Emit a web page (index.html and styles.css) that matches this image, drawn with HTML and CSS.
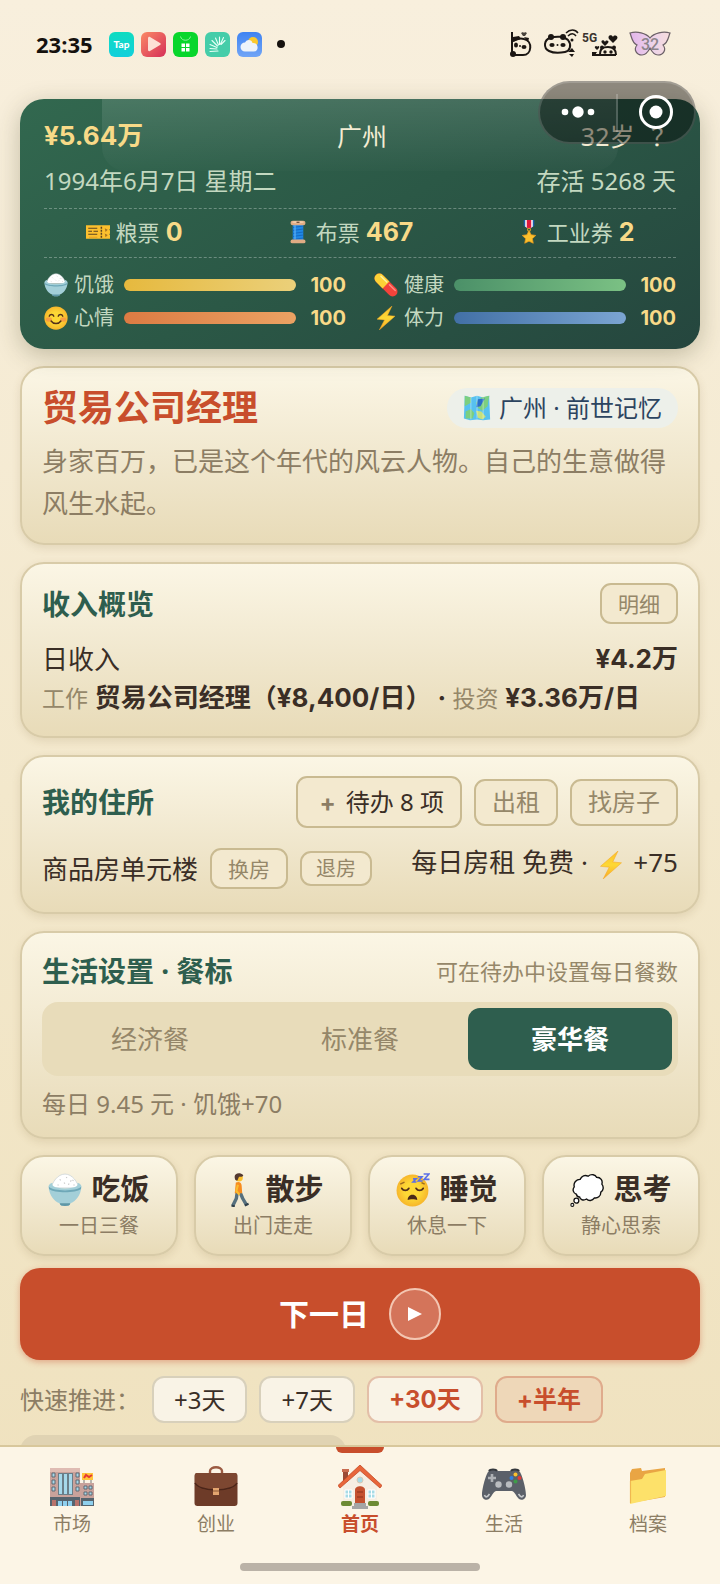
FILE: index.html
```html
<!DOCTYPE html>
<html lang="zh-CN">
<head>
    <meta charset="UTF-8">
    <meta name="viewport" content="width=device-width, initial-scale=1.0">
    <title>首页</title>
    <link rel="stylesheet" href="styles.css">
</head>
<body>

<!-- 图标 -->
<svg class="defs" aria-hidden="true">
    <defs>
        <linearGradient id="g-tap" x1="0" y1="0" x2="0" y2="1"><stop offset="0" stop-color="#0fdcc0"/><stop offset="1" stop-color="#12cfdc"/></linearGradient>
        <linearGradient id="g-play" x1="0" y1="0" x2="1" y2="1"><stop offset="0" stop-color="#fb8a66"/><stop offset="1" stop-color="#d52e58"/></linearGradient>
        <linearGradient id="g-sky" x1="0" y1="0" x2="0" y2="1"><stop offset="0" stop-color="#3f83f2"/><stop offset="1" stop-color="#71a5f6"/></linearGradient>
        <linearGradient id="g-wing" x1="0" y1="0" x2="1" y2="0"><stop offset="0" stop-color="#e3b4ea"/><stop offset=".55" stop-color="#ecd3ea"/><stop offset="1" stop-color="#f7dcdc"/></linearGradient>
        <linearGradient id="g-bolt" x1="0" y1="0" x2="0" y2="1"><stop offset="0" stop-color="#fbc02d"/><stop offset=".5" stop-color="#fdd835"/><stop offset="1" stop-color="#f9a825"/></linearGradient>
        <radialGradient id="g-face"><stop offset=".5" stop-color="#fdd835"/><stop offset="1" stop-color="#f7b62b"/></radialGradient>
    </defs>
    <symbol id="i-rice" viewBox="0 0 32 32">
        <path d="M3 14C4 9 9 1 16 1s12 8 13 13z" fill="#fff" stroke="#c9d3d6" stroke-width=".7"/>
        <path d="M11 6l1 1M17 4l1 .6M21 8l1-1M15 9l1 1M24 11l1 .6M19 11l1-1M9 11l1 .5M23 6.500l1 1" stroke="#c9c9c9" stroke-width="1" fill="none"/>
        <path d="M.5 12.500C1 10.500 3 9 4.500 9.500c-2 2 1 5 11.500 5s13.500-3 11.500-5c1.500-.5 3.500 1 4 3C31 21 26 27 21 28.500c0 2-2 2.500-5 2.500s-5-.5-5-2.500C6 27 1 21 .5 12.500z" fill="#a3cfd8"/>
        <path d="M.8 13C5 17.500 27 17.500 31.200 13L31 15C26 19 6 19 1 15z" fill="#6ea8b8"/>
        <path d="M11 28.500h10c0 2-2 2.500-5 2.500s-5-.5-5-2.500z" fill="#5f97a6"/>
    </symbol>
    <symbol id="i-ticket" viewBox="0 0 32 32">
        <path d="M0 7h32v5l-1 1 1 1v4l-1 1 1 1v5H0z" fill="#fcc02e"/>
        <path d="M3 11h12M3 15h5M10 15h6M3 19h12" stroke="#5b4423" stroke-width="1.600"/>
        <path d="M4 23h11" stroke="#d99822"/>
        <path d="M20.500 9v15" stroke="#5b4423" stroke-width="2" stroke-dasharray="2.500 1.500"/>
        <path d="M25 11l4 2-3 3zM25 18l4 2-3 3z" fill="#a87421"/>
    </symbol>
    <symbol id="i-spool" viewBox="0 0 32 32">
        <path d="M9 5h14v22H9z" fill="#1e88e5"/>
        <path d="M9 10l14-2M9 14l14-2M9 18l14-2M9 22l14-2M9 26l14-2" stroke="#1565c0" stroke-width="1.200"/>
        <path d="M12 7v19" stroke="#64b5f6" stroke-width="1.500"/>
        <rect x="6" y="1" width="20" height="6" rx="3" fill="#e0ac84"/><ellipse cx="16" cy="2.800" rx="8" ry="1.600" fill="#f3cba8"/>
        <path d="M14 3h4" stroke="#5a3a25" stroke-width="1.500"/>
        <rect x="6" y="26" width="20" height="5" rx="2.500" fill="#e0ac84"/>
    </symbol>
    <symbol id="i-medal" viewBox="0 0 32 32">
        <path d="M9 0h14v8l-7 4-7-4z" fill="#1c5fae"/><path d="M11 0h10v9l-5 3-5-3z" fill="#fff"/><path d="M13 0h6v10l-3 2-3-2z" fill="#e0183c"/>
        <circle cx="16" cy="13" r="2" fill="none" stroke="#d99a22" stroke-width="1.400"/>
        <path d="M16 14l2.800 5.700 6.200.9-4.500 4.300 1.200 6.100L16 28.200 10.300 31l1.200-6.100L7 20.600l6.200-.9z" fill="#fbc02d" stroke="#e8991c"/>
    </symbol>
    <symbol id="i-pill" viewBox="0 0 32 32">
        <g transform="rotate(45 16 16)"><rect x="-3" y="9.500" width="38" height="13" rx="6.500" fill="#f3433b"/><path d="M16 9.500H3.500a6.500 6.500 0 0 0 0 13H16z" fill="#fdd236"/><path d="M3 12.500h11" stroke="#fff2a0" stroke-width="2" stroke-linecap="round"/><path d="M19 12.500h11" stroke="#ff8a80" stroke-width="2" stroke-linecap="round"/></g>
    </symbol>
    <symbol id="i-bolt" viewBox="0 0 32 32"><path d="M24 0L4 17.500l10 1L7 32 28 13.500l-10-1z" fill="url(#g-bolt)" stroke="#f5a623" stroke-width=".6"/></symbol>
    <symbol id="i-smile" viewBox="0 0 32 32">
        <circle cx="16" cy="16" r="15.500" fill="url(#g-face)"/>
        <ellipse cx="6.500" cy="18" rx="4" ry="3" fill="#f8894a" opacity=".7"/><ellipse cx="25.500" cy="18" rx="4" ry="3" fill="#f8894a" opacity=".7"/>
        <path d="M7 13.500c1-3 5-3 6 0M19 13.500c1-3 5-3 6 0M9.500 20c3 4.500 10 4.500 13 0" fill="none" stroke="#54301a" stroke-width="2" stroke-linecap="round"/>
    </symbol>
    <symbol id="i-sleep" viewBox="0 0 32 32">
        <circle cx="15.500" cy="16.500" r="15" fill="url(#g-face)"/>
        <path d="M5.500 14.500c1.500 2.500 5 2.500 6.500 0M19 14.500c1.500 2.500 5 2.500 6.500 0" fill="none" stroke="#54301a" stroke-width="1.800" stroke-linecap="round"/>
        <path d="M4 10.500l4-2M27 10.500l-3-1.500" stroke="#9c6b1d" stroke-width="1.300"/>
        <path d="M15.500 20.500c3 0 4.500 2.500 4.500 5-2-1.200-7-1.200-9 0 0-2.500 1.500-5 4.500-5z" fill="#4a2a18"/>
        <path d="M16 5.500h3l-3 3h3.200M20.500 3.500h4L21 7.500h4M26 1h5l-4.500 5h5" fill="none" stroke="#5b6fe6" stroke-width="1.500"/>
    </symbol>
    <symbol id="i-map" viewBox="0 0 32 32">
        <path d="M2 2l7 2 7-2 7 2 7-2v3l1 24-8 1-7-1-8 1-7-2z" fill="#57c1f0"/>
        <path d="M2 2l7 2v6L2 14zM15 10l6-6 9-2-2 12-6 5-5-3zM3 20l6-3 4 5-2 6H3z" fill="#7ccf7f"/>
        <path d="M17 6l8-1-5 9-5 1z" fill="#2a6fc9"/><path d="M15 19l6 1 5 6-4 3-5-2z" fill="#c6e07c"/>
        <path d="M9 4v25M16 2v26M23 4v25" stroke="#fff" stroke-opacity=".45"/>
    </symbol>
    <symbol id="i-walk" viewBox="0 0 32 32">
        <path d="M14.500 17l-1 7-3.500 7M16.500 17l3 7 3.500 6" fill="none" stroke="#56707e" stroke-width="3.200" stroke-linejoin="round"/>
        <path d="M9 30.500l3 1M21.500 30.500l3.500-1.500" stroke="#2f3f49" stroke-width="2"/>
        <path d="M13 9c3-1.500 5.500 0 5.500 3l.5 7h-7z" fill="#f78c1f"/>
        <path d="M15 11l-1.500 6 3 3.500" fill="none" stroke="#fbbc2f" stroke-width="2"/>
        <circle cx="16" cy="4.500" r="3.600" fill="#fbc02d"/><path d="M12 4.500C11 0 17-1 20 2c0 1.500-3 1.500-4 1.500L14.500 7C13 7.500 12 6 12 4.500z" fill="#543930"/>
    </symbol>
    <symbol id="i-think" viewBox="0 0 32 32">
        <path d="M6 20c-3-1-4-4.500-2-7-1-4 2-7 5.500-7C11 2.500 14 1.500 17 3c3-2.500 7-1.500 8 1 4 0 6 3 5 6.500 2 2.500 1.500 6-1 7.500 0 4-3 6-6 5.500-2 3-5.500 3-7.500 1-3 2-6 .5-6.500-2-1.500.2-2.500-.5-3-2.500z" fill="#fff" stroke="#111" stroke-width="1.300"/>
        <circle cx="6" cy="26" r="2.300" fill="#fff" stroke="#111" stroke-width="1.200"/><circle cx="2.200" cy="30" r="1.400" fill="#fff" stroke="#111"/>
    </symbol>
    <symbol id="i-market" viewBox="0 0 44 44">
        <path d="M0 3h30v38H0z" fill="#c9a29b"/><path d="M0 3h30v4H0z" fill="#dfbcb3"/><path d="M30 18h14v23H30z" fill="#c9a29b"/>
        <path d="M8 8h15v22H8z" fill="#6b7e88"/><path d="M10.500 9v20M15.500 9v20M20.500 9v20" stroke="#a6d8ea" stroke-width="3"/>
        <path d="M2 8h3v4H2zM2 15h3v4H2zM2 22h3v4H2zM26 8h3v4h-3zM26 15h3v4h-3zM26 22h3v4h-3z" fill="#a6d8ea" stroke="#5e6b75"/>
        <path d="M34 21h3v3h-3zM39 21h3v3h-3zM34 27h3v3h-3zM39 27h3v3h-3z" fill="#a6d8ea" stroke="#5e6b75"/>
        <path d="M0 32h30v9H0zM31 33h13v8H31z" fill="#56646e"/><path d="M8 36h4v5H8zM13 36h4v5h-4zM18 36h4v5h-4zM33 36h10v4H33z" fill="#8fd0ee"/>
        <path d="M2 35h4v6H2zM25 35h4v6h-4z" fill="#b8726a"/>
        <path d="M32 8h11v7H32z" fill="#ffc53a"/><path d="M34 13l2-3 3 2 3-2" fill="none" stroke="#e53935" stroke-width="2"/><path d="M34 15v3M41 15v3" stroke="#777"/>
    </symbol>
    <symbol id="i-case" viewBox="0 0 44 44">
        <path d="M16 9V6c0-5 12-5 12 0v3" fill="none" stroke="#9b5a42" stroke-width="2.400"/>
        <rect x=".5" y="8" width="43" height="33" rx="3" fill="#6d3b28"/>
        <path d="M1 10c0-1.500 1-2 2-2h38c1 0 2 .5 2 2v9c-2 4-10 7-21 7S3 23 1 19z" fill="#7d4731"/>
        <path d="M1 18c2 4 10 7 21 7s19-3 21-7" fill="none" stroke="#4b2519" stroke-width="1.600"/>
        <rect x="19" y="23" width="6" height="7" fill="#e3a56f"/><path d="M19 26h6" stroke="#8b5734"/>
    </symbol>
    <symbol id="i-home" viewBox="0 0 44 44">
        <path d="M5 5h5v12H5z" fill="#9b4a35"/><path d="M4 4h7v3H4z" fill="#c96b4f"/>
        <path d="M22 4l17 17v20H5V21z" fill="#f6eee2"/>
        <path d="M22 0L0 20.500 2 23 22 5.500 42 23l2-2.500z" fill="#e8663a" stroke="#c44a26" stroke-width=".8"/>
        <path d="M17 41V25c0-5 10-5 10 0v16z" fill="#c4512f"/><path d="M19 27h6M19 32h6" stroke="#8b321c"/>
        <path d="M7 25h7v8H7zM30 25h7v8h-7z" fill="#a6dbe6" stroke="#fff"/><path d="M10.500 25v8M7 29h7M33.500 25v8M30 29h7" stroke="#fff"/>
        <rect x="3" y="36" width="11" height="5" rx="2" fill="#6d8b34"/><rect x="30" y="36" width="11" height="5" rx="2" fill="#6d8b34"/>
        <path d="M16 38h12v3h2v3H14v-3h2z" fill="#a5a5a5"/><circle cx="22" cy="15" r="3" fill="#a6dbe6" stroke="#d8c8b4"/>
    </symbol>
    <symbol id="i-game" viewBox="0 0 44 44">
        <path d="M7 6c1-2 7-2 8 0h14c1-2 7-2 8 0 3 2 7 18 7 24 0 4-4 6-7 4-3-3-4-7-7-8H14c-3 1-4 5-7 8-3 2-7 0-7-4C0 24 4 8 7 6z" fill="#5b6069"/>
        <path d="M7 6c1-2 7-2 8 0M29 6c1-2 7-2 8 0" stroke="#34383d" stroke-width="2" fill="none"/>
        <path d="M10 9v8M6 13h8" stroke="#aeb1b5" stroke-width="2.600"/>
        <circle cx="16.500" cy="19.500" r="3.200" fill="#b9bcc0"/><circle cx="27" cy="19.500" r="3.200" fill="#b9bcc0"/>
        <circle cx="33.500" cy="9.500" r="2" fill="#fbc02d"/><circle cx="29.500" cy="13" r="2" fill="#2f7fe0"/><circle cx="37.500" cy="13" r="2" fill="#e53935"/><circle cx="33.500" cy="16.500" r="2" fill="#3f9c4a"/>
        <path d="M2.500 30c1 3 3 2 5-1M41.500 30c-1 3-3 2-5-1" fill="none" stroke="#c6c9cc" stroke-width="1.600"/>
    </symbol>
    <symbol id="i-folder" viewBox="0 0 44 44">
        <path d="M4 8l2-4 9-1 1 3 23-3v29L4 38z" fill="#e9a544"/>
        <path d="M4 16l12-2 3-5 21-4v26L4 39z" fill="#fde16a"/><path d="M4.500 16v22" stroke="#f0b850" stroke-width="1.200"/>
    </symbol>
</svg>

<div class="app">

    <header class="status-bar">
        <span class="clock">23:35</span>
        <svg class="app-icon" viewBox="0 0 25 25"><rect width="25" height="25" rx="6" fill="url(#g-tap)"/><text x="12.500" y="16" text-anchor="middle" class="tap-text">Tap</text></svg>
        <svg class="app-icon" viewBox="0 0 25 25"><rect width="25" height="25" rx="6" fill="url(#g-play)"/><path d="M7 6.500c0-1.500 1-2 2-1.500l10 6c1 .6 1 1.500 0 2L9 19c-1 .5-2 0-2-1z" fill="#fde0d5"/></svg>
        <svg class="app-icon" viewBox="0 0 25 25"><rect width="25" height="25" rx="6" fill="#08d62c"/><path d="M7.500 4.500c1 5 9 5 10 0" fill="none" stroke="#8df29d"/><path d="M8.500 11.500h3.500v3.500H8.500zM13 11.500h3.500v3.500H13zM8.500 16h3.500v3.500H8.500zM13 16h3.500v3.500H13z" fill="#fff"/></svg>
        <svg class="app-icon" viewBox="0 0 25 25"><rect width="25" height="25" rx="6" fill="#45cda9"/><path d="M13 19l-8 .5M12 17l-7-.5M12 15.500L5 12.500M12.500 14L7 8.500M13.500 13L10.500 6M14.500 12.500V5M15.500 12l3-6.500M16 12.500l4-4" fill="none" stroke="#e8fff6" stroke-width="1.100" stroke-linecap="round"/></svg>
        <svg class="app-icon" viewBox="0 0 25 25"><rect width="25" height="25" rx="6" fill="url(#g-sky)"/><circle cx="16" cy="10" r="5" fill="#fbc92e"/><path d="M8 19.500a4.500 4.500 0 0 1 0-9c2-4 7-3 7.500.5 6-1 7 8 1.500 8.500z" fill="#eef3fa"/></svg>
        <span class="more-dot"></span>
        <svg class="phone-state" viewBox="0 0 164 32" role="img" aria-label="5G 32">
            <g fill="none" stroke="#1b1613" stroke-width="2">
                <path d="M4 4v23h11c9 0 10-14 1-16-4-1-8 0-11 2"/>
                <path d="M42 10c6-2 14-2 18 2 4 5 2 11-3 12-5 1-12 1-16-1-6-3-5-11 1-13z"/>
                <path d="M58 5c4-4 9-4 12 0M60 8c3-3 6-3 8 0" stroke-width="1.500"/>
                <path d="M84 27h24M92 27c0-7 3-8 8-8s8 2 8 8"/>
            </g>
            <g fill="#1b1613">
                <circle cx="5" cy="26" r="3"/><path d="M5 9l6-1 2 3-8 3zM16 9l5 1-1 4z"/><ellipse cx="8" cy="17" rx="2" ry="2.500"/><ellipse cx="16" cy="19" rx="2.500" ry="2"/><circle cx="12" cy="18" r="1"/><path d="M13 5l2-1 1 1 1-1 2 1-2 3h-2z" opacity=".8"/>
                <circle cx="43" cy="9" r="3"/><circle cx="55" cy="9" r="3"/><ellipse cx="44" cy="17" rx="2.600" ry="2"/><ellipse cx="55" cy="17" rx="2.600" ry="2"/><circle cx="49.500" cy="17" r="1"/><circle cx="64" cy="12" r="1.500"/><path d="M60 24h7l-3-4zM61 26h5l-2 3z"/>
                <path d="M94 15c-2-3 2-4 3-1 1-3 5-1 3 1l-3 3zM101 11c-2-4 3-5 4-2 1-3 6-1 4 2l-4 4zM87 20c-1-2 2-3 2-1 1-2 3-1 2 1l-2 2zM84 24h5l-2 3h-3z"/>
                <circle cx="97" cy="24" r="1.700"/><circle cx="103" cy="24" r="1.700"/><circle cx="94" cy="19.500" r="2"/><circle cx="106" cy="19.500" r="2"/>
            </g>
            <text x="74" y="14" class="net-text">5G</text>
            <path d="M142 10c-4-5-13-7-20-5 2 5 2 10 7 12-4 5 0 10 5 10 4 0 6-3 8-7 2 4 4 7 8 7 5 0 9-5 5-10 5-2 5-7 7-12-7-2-16 0-20 5z" fill="url(#g-wing)" stroke="#6c6168" stroke-width="1.200"/>
            <text x="142" y="22" text-anchor="middle" class="battery-text">32</text>
        </svg>
    </header>

    <div class="capsule">
        <button type="button" aria-label="更多"><svg viewBox="0 0 36 36"><circle cx="5" cy="18" r="3.300" fill="#fff"/><circle cx="18" cy="18" r="5.700" fill="#fff"/><circle cx="31" cy="18" r="3.300" fill="#fff"/></svg></button>
        <button type="button" aria-label="关闭"><svg viewBox="0 0 36 36"><circle cx="18" cy="18" r="15.500" fill="none" stroke="#fff" stroke-width="3"/><circle cx="18" cy="18" r="6.500" fill="#fff"/></svg></button>
    </div>

    <main class="content">

        <section class="hud">
            <div class="hud-row hud-top">
                <strong class="money">¥5.64万</strong>
                <span>广州</span>
                <span class="age">32岁 <a href="#" class="help">？</a></span>
            </div>
            <div class="hud-row hud-date">
                <span>1994年6月7日 星期二</span>
                <span>存活 5268 天</span>
            </div>
            <div class="tickets">
                <span><svg class="icon"><use href="#i-ticket"/></svg>粮票 <b>0</b></span>
                <span><svg class="icon"><use href="#i-spool"/></svg>布票 <b>467</b></span>
                <span><svg class="icon"><use href="#i-medal"/></svg>工业券 <b>2</b></span>
            </div>
            <div class="stats">
                <div class="stat"><svg class="icon"><use href="#i-rice"/></svg><span>饥饿</span><div class="bar"><i class="fill hunger" style="width: 100%"></i></div><b>100</b></div>
                <div class="stat"><svg class="icon"><use href="#i-pill"/></svg><span>健康</span><div class="bar"><i class="fill health" style="width: 100%"></i></div><b>100</b></div>
                <div class="stat"><svg class="icon"><use href="#i-smile"/></svg><span>心情</span><div class="bar"><i class="fill mood" style="width: 100%"></i></div><b>100</b></div>
                <div class="stat"><svg class="icon"><use href="#i-bolt"/></svg><span>体力</span><div class="bar"><i class="fill energy" style="width: 100%"></i></div><b>100</b></div>
            </div>
        </section>

        <section class="card">
            <div class="card-head">
                <h1 class="job">贸易公司经理</h1>
                <a href="#" class="place"><svg class="icon"><use href="#i-map"/></svg>广州 · 前世记忆</a>
            </div>
            <p class="desc">身家百万，已是这个年代的风云人物。自己的生意做得风生水起。</p>
        </section>

        <section class="card">
            <div class="card-head">
                <h2>收入概览</h2>
                <button type="button" class="btn">明细</button>
            </div>
            <div class="income">
                <span>日收入</span>
                <strong>¥4.2万</strong>
            </div>
            <p class="income-from"><small>工作</small> <b>贸易公司经理（¥8,400/日） · </b><small>投资</small> <b>¥3.36万/日</b></p>
        </section>

        <section class="card home">
            <div class="card-head">
                <h2>我的住所</h2>
                <div class="btns">
                    <button type="button" class="btn btn-todo"><b>+</b>待办 8 项</button>
                    <button type="button" class="btn btn-mid">出租</button>
                    <button type="button" class="btn btn-mid">找房子</button>
                </div>
            </div>
            <div class="house">
                <div class="btns">
                    <span>商品房单元楼</span>
                    <button type="button" class="btn">换房</button>
                    <button type="button" class="btn btn-small">退房</button>
                </div>
                <span class="rent">每日房租 免费 · <svg class="icon"><use href="#i-bolt"/></svg> +75</span>
            </div>
        </section>

        <section class="card">
            <div class="card-head">
                <h2>生活设置 · 餐标</h2>
                <span class="tip">可在待办中设置每日餐数</span>
            </div>
            <div class="meals">
                <button type="button">经济餐</button>
                <button type="button">标准餐</button>
                <button type="button" class="active">豪华餐</button>
            </div>
            <p class="meal-cost">每日 9.45 元 · 饥饿+70</p>
        </section>

        <div class="actions">
            <button type="button" class="action"><strong><svg class="icon"><use href="#i-rice"/></svg>吃饭</strong><small>一日三餐</small></button>
            <button type="button" class="action"><strong><svg class="icon"><use href="#i-walk"/></svg>散步</strong><small>出门走走</small></button>
            <button type="button" class="action"><strong><svg class="icon"><use href="#i-sleep"/></svg>睡觉</strong><small>休息一下</small></button>
            <button type="button" class="action"><strong><svg class="icon"><use href="#i-think"/></svg>思考</strong><small>静心思索</small></button>
        </div>

        <button type="button" class="next-day">下一日<span class="play"><svg viewBox="0 0 16 16"><path d="M1 1l14 7-14 7z" fill="#fff"/></svg></span></button>

        <div class="quick">
            <span>快速推进：</span>
            <button type="button">+3天</button>
            <button type="button">+7天</button>
            <button type="button" class="hot">+30天</button>
            <button type="button" class="hot half">+半年</button>
        </div>

        <div class="more"></div>
    </main>

    <nav class="tabbar">
        <a href="#"><svg><use href="#i-market"/></svg>市场</a>
        <a href="#"><svg><use href="#i-case"/></svg>创业</a>
        <a href="#" class="active"><svg><use href="#i-home"/></svg>首页</a>
        <a href="#"><svg><use href="#i-game"/></svg>生活</a>
        <a href="#"><svg><use href="#i-folder"/></svg>档案</a>
    </nav>
</div>

</body>
</html>
```
FILE: styles.css
```css
* {
    margin: 0;
    padding: 0;
    box-sizing: border-box;
}

body {
    font-family: "Noto Sans", "Noto Sans CJK SC", sans-serif;
    font-size: 26px;
    line-height: 38px;
    color: #3a2e26;
}

a {
    color: inherit;
    text-decoration: none;
}

button {
    font: inherit;
    color: inherit;
    border: none;
    background: none;
    cursor: pointer;
}

b, strong, .hot {
    font-family: Inter, "Noto Sans CJK SC", sans-serif;
}

.defs {
    position: absolute;
    width: 0;
    height: 0;
}

.icon {
    width: 24px;
    height: 24px;
    flex: none;
}

.app {
    position: relative;
    display: flex;
    flex-direction: column;
    height: 100vh;
    background: linear-gradient(#f8efdd, #f3e8cc 50%, #efe1bd);
}

/* 状态栏 */
.status-bar {
    display: flex;
    align-items: center;
    gap: 7px;
    flex: none;
    height: 99px;
    padding: 0 48px 11px 36px;
}

.clock {
    margin-right: 9px;
    font-family: "Open Sans", sans-serif;
    font-size: 22px;
    font-weight: 700;
    color: #15110e;
}

.app-icon {
    width: 25px;
    height: 25px;
}

.tap-text {
    font: 900 10px Lato, sans-serif;
    fill: #fff;
}

.more-dot {
    width: 8px;
    height: 8px;
    margin-left: 8px;
    border-radius: 50%;
    background: #15110e;
}

.phone-state {
    width: 164px;
    height: 32px;
    margin-left: auto;
}

.net-text {
    font: 700 12px Roboto, sans-serif;
    fill: #3a332e;
}

.battery-text {
    font: 500 16px Roboto, sans-serif;
    fill: #8d858c;
}

.capsule {
    position: absolute;
    top: 81px;
    right: 24px;
    z-index: 2;
    display: flex;
    align-items: center;
    width: 158px;
    height: 63px;
    border: 2px solid rgba(255, 255, 255, .16);
    border-radius: 32px;
    background: rgba(0, 0, 0, .42);
}

.capsule button {
    flex: 1;
    height: 38px;
}

.capsule button + button {
    border-left: 2px solid rgba(255, 255, 255, .2);
}

.capsule svg {
    width: 36px;
    height: 36px;
}

.content {
    flex: 1;
    min-height: 0;
    padding: 0 20px;
    overflow-y: auto;
    scrollbar-width: none;
    /* 给卡片阴影留出位置 */
    margin-top: -30px;
    padding-top: 30px;
}

/* 顶部信息 */
.hud {
    position: relative;
    padding: 18px 24px 17px;
    border-radius: 24px;
    background: linear-gradient(150deg, #32684f, #2b5846 50%, #25463e);
    box-shadow: 0 6px 24px rgba(60, 60, 30, .28);
    color: #c3d8c0;
}

.hud::before {
    content: "";
    position: absolute;
    top: 0;
    left: 12%;
    right: 12%;
    height: 72px;
    border-radius: 0 0 24px 24px;
    background: linear-gradient(rgba(255, 255, 255, .12), rgba(255, 255, 255, .01));
}

.hud-row {
    position: relative;
    display: flex;
    justify-content: space-between;
}

.hud-top {
    font-size: 25px;
    color: #f3ecd3;
}

.money, .hud b {
    color: #f8da88;
}

.money {
    font-size: 26px;
}

.help {
    margin-left: 10px;
}

.hud-date {
    margin-top: 7px;
    padding-bottom: 8px;
    font-size: 24px;
}

.tickets {
    display: flex;
    justify-content: space-around;
    gap: 20px;
    padding: 4px 0 6px;
    border-top: 1px dashed rgba(255, 255, 255, .3);
    border-bottom: 1px dashed rgba(255, 255, 255, .3);
    font-size: 22px;
}

.tickets span {
    display: flex;
    align-items: center;
    gap: 6px;
}

.tickets b {
    font-size: 25px;
}

.stats {
    display: grid;
    grid-template-columns: 1fr 1fr;
    gap: 5px 28px;
    padding-top: 13px;
    font-size: 20px;
    line-height: 28px;
}

.stat {
    display: flex;
    align-items: center;
    gap: 6px;
}

.bar {
    flex: 1;
    height: 12px;
    margin-left: 4px;
    border-radius: 6px;
    background: rgba(0, 0, 0, .2);
}

.fill {
    display: block;
    height: 100%;
    border-radius: 6px;
}

.hunger {
    background: linear-gradient(90deg, #e6b93e, #ebd07a);
}

.mood {
    background: linear-gradient(90deg, #dc7b43, #eba263);
}

.health {
    background: linear-gradient(90deg, #4b9068, #7bc184);
}

.energy {
    background: linear-gradient(90deg, #4270a6, #7ba5d2);
}

.stat b {
    width: 44px;
    text-align: right;
}

/* 卡片 */
.card, .action {
    border: 2px solid #d8cba8;
    border-radius: 24px;
    background: linear-gradient(#fbf6e5, #f1e8cf 50%, #e8dbb8);
    box-shadow: 0 3px 8px rgba(120, 95, 40, .14);
}

.card {
    margin-top: 17px;
    padding: 19px 20px;
}

.card-head {
    display: flex;
    align-items: center;
    justify-content: space-between;
}

h2 {
    font-size: 28px;
    color: #2e5e4e;
}

.job {
    font-size: 36px;
    line-height: 42px;
    color: #c84e2c;
}

.place {
    display: flex;
    align-items: center;
    gap: 8px;
    height: 40px;
    padding: 0 16px;
    border-radius: 20px;
    background: #edf0ea;
    font-size: 24px;
    color: #2c4460;
}

.place .icon, .rent .icon {
    width: 28px;
    height: 28px;
}

.desc {
    margin-top: 11px;
    line-height: 42px;
    color: #8c7d64;
}

.btn {
    height: 41px;
    padding: 0 16px;
    border: 2px solid #c9ba91;
    border-radius: 11px;
    background: #f3e9cf;
    font-size: 21px;
    line-height: 30px;
    color: #958769;
}

.btn-mid {
    height: 47px;
    font-size: 24px;
}

.btn-small {
    height: 35px;
    padding: 0 14px;
    font-size: 20px;
}

.btn-todo {
    height: 52px;
    font-size: 24px;
    color: #3a2e26;
}

.btn-todo b {
    margin: 0 10px 0 5px;
    color: #8c7d64;
}

.btns {
    display: flex;
    align-items: center;
    gap: 12px;
}

.income {
    display: flex;
    justify-content: space-between;
    margin-top: 16px;
}

.income-from small {
    font-size: 23px;
    color: #958769;
}

.house {
    display: flex;
    justify-content: space-between;
    margin: 20px 0 4px;
}

.rent {
    line-height: 28px;
}

.rent .icon {
    margin: 0 2px;
    vertical-align: middle;
}

.tip {
    font-size: 22px;
    color: #958769;
}

.meals {
    display: flex;
    gap: 6px;
    margin-top: 12px;
    padding: 6px;
    border-radius: 16px;
    background: #e8dcba;
}

.meals button {
    flex: 1;
    height: 62px;
    border-radius: 12px;
    color: #958769;
}

.meals .active {
    background: #2e5e4e;
    font-weight: 700;
    color: #fff;
}

.meal-cost {
    margin: 8px 0 -6px;
    font-size: 24px;
    line-height: 40px;
    color: #8c7d64;
}

/* 行动 */
.actions {
    display: grid;
    grid-template-columns: repeat(4, 1fr);
    gap: 16px;
    margin-top: 16px;
}

.action {
    height: 101px;
    padding-top: 2px;
}

.action strong {
    display: flex;
    align-items: center;
    justify-content: center;
    gap: 9px;
    font-size: 29px;
}

.action .icon {
    width: 34px;
    height: 34px;
}

.action small {
    display: block;
    font-size: 20px;
    line-height: 34px;
    color: #8c7d64;
}

.next-day {
    display: flex;
    align-items: center;
    justify-content: center;
    gap: 20px;
    width: 100%;
    height: 92px;
    margin-top: 12px;
    border-radius: 20px;
    background: #c84e2c;
    box-shadow: 0 2px 6px rgba(200, 78, 44, .4);
    font-size: 30px;
    font-weight: 700;
    color: #fff;
}

.play {
    display: flex;
    align-items: center;
    justify-content: center;
    width: 52px;
    height: 52px;
    border: 2px solid #f3c6b2;
    border-radius: 50%;
    background: rgba(255, 255, 255, .22);
}

.play svg {
    width: 16px;
    height: 16px;
}

.quick {
    display: flex;
    align-items: center;
    gap: 12px;
    margin-top: 16px;
    font-size: 24px;
    color: #8c7d64;
}

.quick button {
    height: 47px;
    padding: 0 20px;
    border: 2px solid #d8d0bb;
    border-radius: 12px;
    background: #f9f3e6;
    color: #3a2e26;
}

.quick .hot {
    border-color: #e3bfa8;
    font-weight: 700;
    color: #c84e2c;
}

.quick .half {
    border-color: #dfab8c;
    background: #eed7b8;
}

.more {
    width: 48%;
    height: 60px;
    margin-top: 12px;
    border-radius: 16px;
    background: #e0d3b3;
}

/* 底部导航 */
.tabbar {
    position: relative;
    z-index: 1;
    display: flex;
    flex: none;
    height: 139px;
    border-top: 2px solid #d8c79b;
    background: #fcf5e6;
}

.tabbar a {
    position: relative;
    flex: 1;
    display: flex;
    flex-direction: column;
    align-items: center;
    padding-top: 18px;
    font-size: 19px;
    line-height: 30px;
    color: #8c7d64;
}

.tabbar svg {
    width: 44px;
    height: 44px;
}

.tabbar .active {
    font-weight: 700;
    color: #c84e2c;
}

.tabbar .active::before {
    content: "";
    position: absolute;
    top: 0;
    width: 48px;
    height: 6px;
    border-radius: 0 0 6px 6px;
    background: #c84e2c;
}

.tabbar::after {
    content: "";
    position: absolute;
    left: 33.3%;
    right: 33.3%;
    bottom: 13px;
    height: 8px;
    border-radius: 4px;
    background: #bab2a7;
}
```
